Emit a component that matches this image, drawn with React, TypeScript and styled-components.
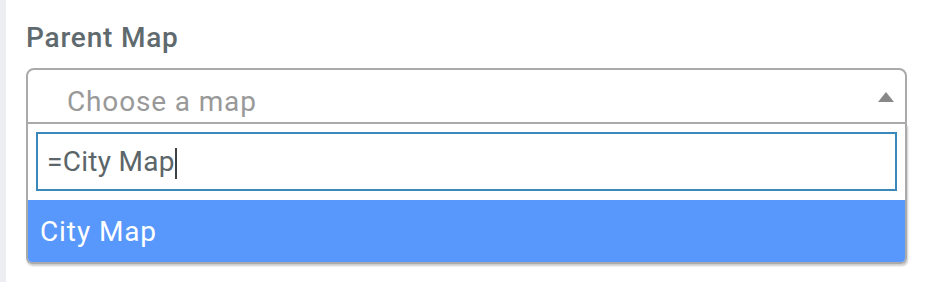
import React from "react";
import styled, { createGlobalStyle } from "styled-components";

const GlobalStyle = createGlobalStyle`
  html, body {
    margin: 0;
    padding: 0;
    background: #ffffff;
  }
  body {
    font-family: Roboto, "Liberation Sans", Arial, sans-serif;
  }
`;

const Page = styled.div`
  display: flex;
  width: 930px;
  height: 282px;
  background: #ffffff;
`;

const SideStrip = styled.div`
  width: 6px;
  flex: none;
  background: #eceef2;
`;

const Content = styled.div`
  display: flex;
  flex-direction: column;
  padding: 22px 0 0 20px;
`;

const Label = styled.label`
  font-size: 28px;
  line-height: 32px;
  font-weight: 500;
  letter-spacing: 0.8px;
  color: #5f6a6e;
  margin-bottom: 14px;
`;

const Select = styled.div`
  width: 881px;
  display: flex;
  flex-direction: column;
`;

const Selection = styled.div`
  box-sizing: border-box;
  height: 56px;
  display: flex;
  align-items: flex-start;
  border: 2px solid #aaaaaa;
  border-radius: 8px 8px 0 0;
  padding: 16px 11px 0 39px;
`;

const Placeholder = styled.span`
  flex: 1;
  font-size: 28px;
  line-height: 32px;
  letter-spacing: 0.85px;
  color: #999999;
`;

const ArrowUp = styled.span`
  width: 0;
  height: 0;
  margin-top: 6px;
  border-style: solid;
  border-width: 0 8px 10px 8px;
  border-color: transparent transparent #888888 transparent;
`;

const Dropdown = styled.div`
  box-sizing: border-box;
  border: 2px solid #aaaaaa;
  border-top: none;
  border-radius: 0 0 6px 6px;
  box-shadow: 1px 2px 2px rgba(0, 0, 0, 0.2);
  overflow: hidden;
`;

const SearchWrap = styled.div`
  padding: 8px 8px 9px 8px;
`;

const SearchField = styled.div`
  box-sizing: border-box;
  height: 59px;
  border: 2px solid #3a89ba;
  display: flex;
  align-items: center;
  padding-left: 9px;
  font-size: 28px;
  line-height: 32px;
  letter-spacing: 0.3px;
  color: #5c6569;
`;

const Caret = styled.span`
  display: inline-block;
  width: 2px;
  height: 31px;
  margin-top: 4px;
  background: #3c4245;
`;

const Option = styled.div<{ $highlighted?: boolean }>`
  height: 62px;
  box-sizing: border-box;
  padding: 16px 12px 14px 12px;
  font-size: 28px;
  line-height: 32px;
  letter-spacing: 0.9px;
  background: ${(p) => (p.$highlighted ? "#5897fb" : "#ffffff")};
  color: ${(p) => (p.$highlighted ? "#ffffff" : "#444444")};
`;

export default function App() {
  return (
    <>
      <GlobalStyle />
      <Page>
        <SideStrip />
        <Content>
          <Label>Parent Map</Label>
          <Select>
            <Selection>
              <Placeholder>Choose a map</Placeholder>
              <ArrowUp />
            </Selection>
            <Dropdown>
              <SearchWrap>
                <SearchField>
                  <span>=City Map</span>
                  <Caret />
                </SearchField>
              </SearchWrap>
              <Option $highlighted>City Map</Option>
            </Dropdown>
          </Select>
        </Content>
      </Page>
    </>
  );
}
